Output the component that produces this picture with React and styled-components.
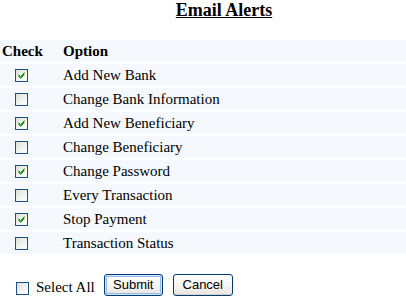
import React, { useState } from "react";
import styled, { createGlobalStyle } from "styled-components";

const GlobalStyle = createGlobalStyle`
  html, body {
    margin: 0;
    padding: 0;
    background: #ffffff;
  }
  body {
    font-family: "Liberation Serif", "Times New Roman", serif;
    color: #000;
  }
`;

const Page = styled.div`
  width: 406px;
  height: 301px;
  overflow: hidden;
`;

const Title = styled.h1`
  margin: 0;
  padding-left: 42px;
  text-align: center;
  font-size: 18px;
  font-weight: bold;
  text-decoration: underline;
  line-height: 21px;
`;

const Table = styled.table`
  width: 100%;
  margin-top: 17px;
  border-collapse: separate;
  border-spacing: 0 2px;
  font-size: 15px;
`;

const Row = styled.tr`
  background: #f5f9fe;
`;

const HeadCell = styled.th`
  box-sizing: border-box;
  height: 22px;
  text-align: left;
  font-weight: bold;
  padding: 0 0 0 ${(p) => p.$pad}px;
  width: ${(p) => (p.$w ? `${p.$w}px` : "auto")};
  line-height: 18px;
  vertical-align: middle;
`;

const Cell = styled.td`
  box-sizing: border-box;
  height: 22px;
  padding: 0 0 0 ${(p) => p.$pad}px;
  line-height: 18px;
  vertical-align: middle;
`;

const Box = styled.span`
  display: block;
  box-sizing: border-box;
  width: 13px;
  height: 13px;
  border: 1px solid #1c5180;
  background: linear-gradient(135deg, #dcdcd7 0%, #f4f4f1 60%, #ffffff 100%);
  position: relative;
  cursor: pointer;
  svg {
    position: absolute;
    left: 1px;
    top: 1px;
  }
`;

const Check = ({ checked, onClick }) => (
  <Box onClick={onClick}>
    {checked && (
      <svg width="9" height="9" viewBox="0 0 9 9">
        <path
          d="M1.5 3.5 L3.5 5.5 L7.5 1.5 M1.5 4.5 L3.5 6.5 L7.5 2.5 M1.5 5.5 L3.5 7.5 L7.5 3.5"
          stroke="#21a121"
          strokeWidth="1"
          fill="none"
        />
      </svg>
    )}
  </Box>
);

const CheckWrap = styled.div`
  display: flex;
  align-items: center;
  margin-bottom: ${(p) => p.$bottom || 0}px;
`;

const Footer = styled.div`
  display: flex;
  align-items: flex-end;
  margin-top: 18px;
  padding-left: 16px;
`;

const SelectLabel = styled.span`
  font-size: 15px;
  margin: 0 9px 0 7px;
  line-height: 17px;
`;

const Button = styled.button`
  box-sizing: border-box;
  height: 22px;
  width: ${(p) => p.$w}px;
  padding: 0;
  margin-right: 10px;
  font-family: "Liberation Sans", Arial, sans-serif;
  font-size: 13px;
  line-height: 18px;
  color: #000;
  border: 1px solid #003c74;
  border-radius: 3px;
  background: linear-gradient(180deg, #ffffff 0%, #f5f4f0 55%, #e8e4e0 100%);
  box-shadow: ${(p) =>
    p.$primary
      ? "inset 0 0 0 1px #cee7ff, inset 0 0 0 2px #98b8ea"
      : "inset 0 -1px 0 #d6d0c5"};
  cursor: pointer;
`;

const OPTIONS = [
  ["Add New Bank", true],
  ["Change Bank Information", false],
  ["Add New Beneficiary", true],
  ["Change Beneficiary", false],
  ["Change Password", true],
  ["Every Transaction", false],
  ["Stop Payment", true],
  ["Transaction Status", false],
];

export default function App() {
  const [checks, setChecks] = useState(OPTIONS.map((o) => o[1]));
  const [all, setAll] = useState(false);

  const toggle = (i) =>
    setChecks((c) => c.map((v, j) => (j === i ? !v : v)));

  return (
    <Page>
      <GlobalStyle />
      <Title>Email Alerts</Title>
      <Table>
        <thead>
          <Row>
            <HeadCell $pad={2} $w={63}>Check</HeadCell>
            <HeadCell $pad={0}>Option</HeadCell>
          </Row>
        </thead>
        <tbody>
          {OPTIONS.map(([label], i) => (
            <Row key={label}>
              <Cell $pad={15}>
                <CheckWrap>
                  <Check checked={checks[i]} onClick={() => toggle(i)} />
                </CheckWrap>
              </Cell>
              <Cell $pad={0}>{label}</Cell>
            </Row>
          ))}
        </tbody>
      </Table>
      <Footer>
        <CheckWrap $bottom={1}>
          <Check checked={all} onClick={() => setAll(!all)} />
        </CheckWrap>
        <SelectLabel>Select All</SelectLabel>
        <Button $w={59} $primary>Submit</Button>
        <Button $w={60}>Cancel</Button>
      </Footer>
    </Page>
  );
}
